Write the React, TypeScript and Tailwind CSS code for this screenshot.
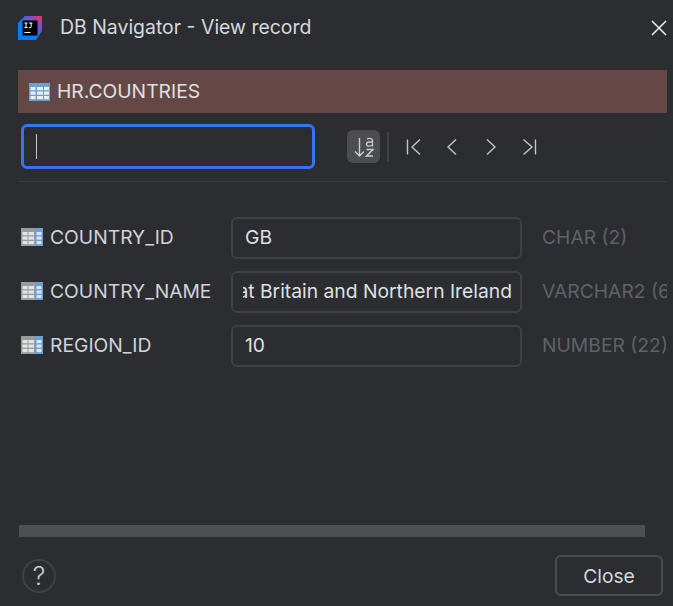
import React from "react";

function LogoIcon() {
  return (
    <svg width="24" height="24" viewBox="0 0 24 24" className="block">
      <defs>
        <linearGradient id="lg" x1="0" y1="1" x2="1" y2="0">
          <stop offset="0" stopColor="#087cfa" />
          <stop offset="0.45" stopColor="#087cfa" />
          <stop offset="0.72" stopColor="#7b4fc4" />
          <stop offset="1" stopColor="#fe2857" />
        </linearGradient>
      </defs>
      <path d="M7 0H24V15L18 24H0V7Z" fill="url(#lg)" />
      <rect x="4.5" y="4.5" width="15" height="15" fill="#000" />
      <path d="M6.5 7H9.5M8 7V11.5M6.5 11.5H9.5M11 7H14.5M13.2 7V10.8Q13.2 11.7 12 11.7H10.8" stroke="#fff" strokeWidth="1" fill="none" />
      <rect x="6.5" y="16" width="6" height="1" fill="#fff" />
    </svg>
  );
}

function TableIcon() {
  return (
    <svg width="21" height="18" viewBox="0 0 21 18" className="block shrink-0">
      <rect width="21" height="18" fill="#6f9fcf" />
      {[4, 8.5, 13].map((y) =>
        [1.5, 8, 15].map((x) => (
          <rect key={`${x}-${y}`} x={x} y={y} width={x === 8 ? 6 : 5} height="3.2" fill="#e8eef3" />
        ))
      )}
    </svg>
  );
}

function FieldIcon() {
  return (
    <svg width="22" height="18" viewBox="0 0 22 18" className="block shrink-0">
      <rect width="14" height="18" fill="#9a9b9c" />
      <rect x="14" width="8" height="18" fill="#6c9fd4" />
      {[4, 8.5, 13].map((y) => (
        <g key={y}>
          <rect x="1.5" y={y} width="5" height="3.2" fill="#e4e4e4" />
          <rect x="7.5" y={y} width="5.5" height="3.2" fill="#e4e4e4" />
          <rect x="15.5" y={y} width="5" height="3.2" fill="#d5e6f6" />
        </g>
      ))}
    </svg>
  );
}

function Nav({ d }: { d: string }) {
  return (
    <svg width="18" height="18" viewBox="0 0 18 18" className="block" fill="none" stroke="#c4c6ca" strokeWidth="1.4">
      <path d={d} />
    </svg>
  );
}

function Row({ label, value, type, clip }: { label: string; value: string; type: string; clip?: boolean }) {
  return (
    <div className="flex items-center h-[42px]">
      <div className="w-[213px] pl-[3px] pb-[2px] flex items-center gap-[7px] shrink-0">
        <FieldIcon />
        <span className="text-[19.3px] leading-[24px] text-[#d0d3d8] whitespace-nowrap">{label}</span>
      </div>
      <div className="w-[291px] h-[42px] shrink-0 rounded-[6px] border-2 border-[#3f4145] pl-[10px] pr-[8px] pb-[2px] flex items-center">
        <div className={`w-full flex overflow-hidden ${clip ? "justify-end" : "pl-[2px]"}`}>
          <span className="text-[19.3px] leading-[24px] text-[#dfe1e5] whitespace-nowrap shrink-0">{value}</span>
        </div>
      </div>
      <span className="ml-[20px] pb-[2px] text-[19.3px] leading-[24px] text-[#5f6266] whitespace-nowrap">{type}</span>
    </div>
  );
}

export default function App() {
  return (
    <div className="w-[673px] h-[606px] bg-[#2b2d30] font-['Inter',sans-serif] flex flex-col overflow-hidden">
      <div className="h-[55px] shrink-0 flex items-center pl-[18px] pr-[5px]">
        <LogoIcon />
        <span className="ml-[18px] pt-[1px] text-[19.45px] text-[#d5d8dd] leading-none">DB Navigator - View record</span>
        <svg width="18" height="18" viewBox="0 0 18 18" className="ml-auto block" fill="none" stroke="#f2f2f2" strokeWidth="1.5">
          <path d="M2 2L16 16M16 2L2 16" />
        </svg>
      </div>

      <div className="mt-[15px] ml-[18px] w-[649px] h-[43px] shrink-0 bg-[#654845] flex items-center pl-[11px] gap-[7px]">
        <TableIcon />
        <span className="text-[19.3px] text-[#dfe1e5]">HR.COUNTRIES</span>
      </div>

      <div className="mt-[11px] ml-[21px] h-[45px] shrink-0 flex items-center">
        <div className="w-[294px] h-[45px] rounded-[6px] border-[3px] border-[#3574f0] flex items-center pl-[12px]">
          <div className="w-px h-[25px] bg-[#c8c8c8]" />
        </div>
        <div className="ml-[32px] w-[33px] h-[33px] rounded-[6px] bg-[#4b4d51] flex items-center justify-center relative">
          <svg width="27" height="27" viewBox="0 0 27 27" className="block" fill="none" stroke="#c9cbcf" strokeWidth="1.4">
            <path d="M9.5 5V23M5 18.5L9.5 23L14 18.5" />
            <path d="M16.8 6Q18.5 5 20.3 5.4Q22.5 6 22.5 7.8V13.5M22.5 9H19Q16.5 9.2 16.5 11.2Q16.7 13.2 19 13.2Q21.5 13.2 22.5 11.5" strokeWidth="1.3" />
            <path d="M16.5 16.5H23L16.5 23H23" strokeWidth="1.5" />
          </svg>
        </div>
        <div className="ml-[7px] w-[2px] h-[30px] bg-[#404246]" />
        <div className="ml-[16px] flex items-center gap-[21px]">
          <Nav d="M2.5 1.5V16.5M15 1.5L7 9L15 16.5" />
          <Nav d="M12 1.5L4 9L12 16.5" />
          <Nav d="M4 1.5L12 9L4 16.5" />
          <Nav d="M1.5 1.5L10 9L1.5 16.5M13.5 1.5V16.5" />
        </div>
      </div>

      <div className="mt-[12px] ml-[18px] w-[649px] h-px shrink-0 bg-[#3a3c40]" />

      <div className="mt-[35px] ml-[18px] w-[649px] shrink-0 flex flex-col gap-[12px] overflow-hidden">
        <Row label="COUNTRY_ID" value="GB" type="CHAR (2)" />
        <Row label="COUNTRY_NAME" value="Great Britain and Northern Ireland" type="VARCHAR2 (60)" clip />
        <Row label="REGION_ID" value="10" type="NUMBER (22)" />
      </div>

      <div className="mt-[158px] ml-[19px] w-[626px] h-[12px] shrink-0 bg-[#4d4f52]" />

      <div className="mt-[18px] pl-[22px] pr-[10px] flex items-start justify-between">
        <div className="mt-[4px] w-[34px] h-[34px] rounded-full border-2 border-[#3f4145] flex items-center justify-center text-[25px] font-light text-[#c9cbcf] leading-none">?</div>
        <div className="w-[108px] h-[41px] pt-[2px] rounded-[6px] border-2 border-[#4a4c50] flex items-center justify-center text-[19.3px] text-[#d5d8dd]">Close</div>
      </div>
    </div>
  );
}
